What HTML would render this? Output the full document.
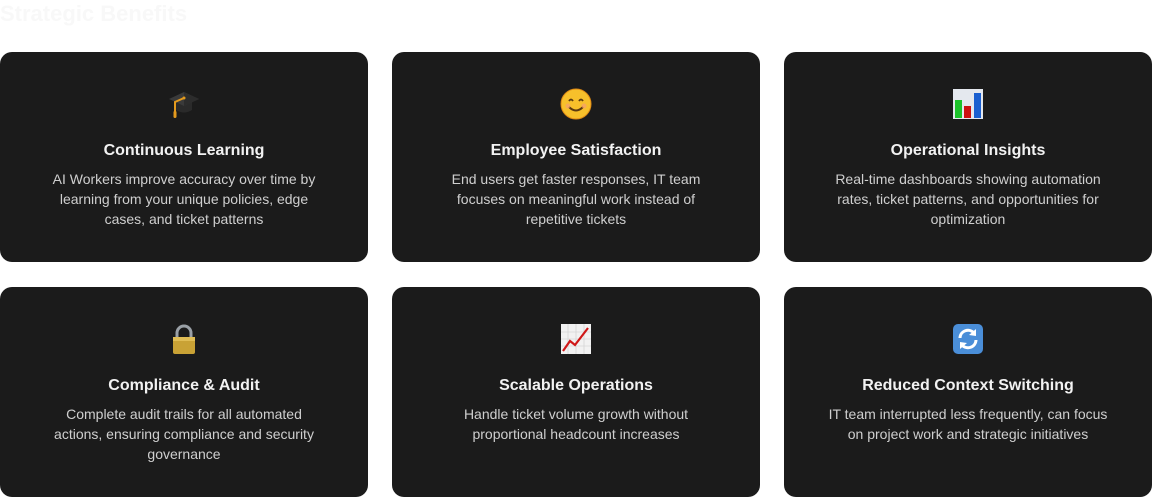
<!DOCTYPE html>
<html><head><style>
*{margin:0;padding:0;box-sizing:border-box}
body{width:1152px;height:497px;background:#fff;font-family:"Liberation Sans",sans-serif;position:relative;overflow:hidden}
h2{position:absolute;left:0;top:1px;font-size:22px;font-weight:700;color:#f8f8f8}
.card{position:absolute;width:368px;height:210px;background:#1b1b1b;border-radius:12px;text-align:center;padding-top:36px}
.ic{width:32px;height:32px;margin:0 auto;display:block}
.t{margin-top:19px;font-size:16px;line-height:24px;font-weight:700;color:#f2f2f2}
.d{margin:6px auto 0;width:286px;font-size:14px;line-height:20px;color:#cfcfcf}
</style></head><body>
<h2>Strategic Benefits</h2>

<div class="card" style="left:0;top:52px">
<svg class="ic" viewBox="0 0 32 32"><path d="M8 14 V22 Q16 27 24 22 V14Z" fill="#2a2a2a"/><path d="M16 4 L31 11 L16 18 L1 11Z" fill="#3a3a3a"/><path d="M16 4 L31 11 L16 18Z" fill="#2c2c2c"/><circle cx="16" cy="10" r="1.5" fill="#e39a1e"/><path d="M16 10 L7 14 V25" stroke="#e39a1e" stroke-width="2" fill="none"/><rect x="5.5" y="23" width="3" height="7" rx="1.2" fill="#e39a1e"/></svg>
<div class="t">Continuous Learning</div>
<div class="d">AI Workers improve accuracy over time by learning from your unique policies, edge cases, and ticket patterns</div></div>

<div class="card" style="left:392px;top:52px">
<svg class="ic" viewBox="0 0 32 32"><circle cx="16" cy="16" r="15" fill="#f7c02b" stroke="#e08a14"/><path d="M9 13 Q11 10 13 13 M19 13 Q21 10 23 13" stroke="#5a3a10" stroke-width="1.8" fill="none"/><path d="M9 19 Q16 26 23 19" stroke="#5a3a10" stroke-width="2" fill="none"/><circle cx="8" cy="18" r="2.5" fill="#f59a7a" opacity=".6"/><circle cx="24" cy="18" r="2.5" fill="#f59a7a" opacity=".6"/></svg>
<div class="t">Employee Satisfaction</div>
<div class="d">End users get faster responses, IT team focuses on meaningful work instead of repetitive tickets</div></div>

<div class="card" style="left:784px;top:52px">
<svg class="ic" viewBox="0 0 32 32"><rect x="1" y="1" width="30" height="30" fill="#e4e8ee"/><rect x="3" y="12" width="7" height="18" fill="#1cc22a"/><rect x="12" y="18" width="7" height="12" fill="#cc1010"/><rect x="22" y="5" width="7" height="25" fill="#1a5fd0"/></svg>
<div class="t">Operational Insights</div>
<div class="d">Real-time dashboards showing automation rates, ticket patterns, and opportunities for optimization</div></div>

<div class="card" style="left:0;top:287px">
<svg class="ic" viewBox="0 0 32 32"><path d="M9 15 V10 A7 7 0 0 1 23 10 V15" stroke="#9aa0a6" stroke-width="3" fill="none"/><rect x="5" y="14" width="22" height="17" rx="2" fill="#c9a235"/><rect x="5" y="14" width="22" height="4" fill="#e0bd55"/></svg>
<div class="t">Compliance &amp; Audit</div>
<div class="d">Complete audit trails for all automated actions, ensuring compliance and security governance</div></div>

<div class="card" style="left:392px;top:287px">
<svg class="ic" viewBox="0 0 32 32"><rect x="1" y="1" width="30" height="30" fill="#f2f2f2"/><path d="M1 9H31M1 16H31M1 23H31M8 1V31M16 1V31M24 1V31" stroke="#ccc" stroke-width=".6"/><path d="M3 28 L10 18 L15 22 L28 5" stroke="#d01818" stroke-width="2.2" fill="none"/></svg>
<div class="t">Scalable Operations</div>
<div class="d">Handle ticket volume growth without proportional headcount increases</div></div>

<div class="card" style="left:784px;top:287px">
<svg class="ic" viewBox="0 0 32 32"><rect x="1" y="1" width="30" height="30" rx="5" fill="#4a8ed8"/><path d="M8 15 A8 8 0 0 1 22 10" stroke="#fff" stroke-width="3" fill="none"/><path d="M24 6 L24 13 L17 12Z" fill="#fff"/><path d="M24 17 A8 8 0 0 1 10 22" stroke="#fff" stroke-width="3" fill="none"/><path d="M8 26 L8 19 L15 20Z" fill="#fff"/></svg>
<div class="t">Reduced Context Switching</div>
<div class="d">IT team interrupted less frequently, can focus on project work and strategic initiatives</div></div>
</body></html>
